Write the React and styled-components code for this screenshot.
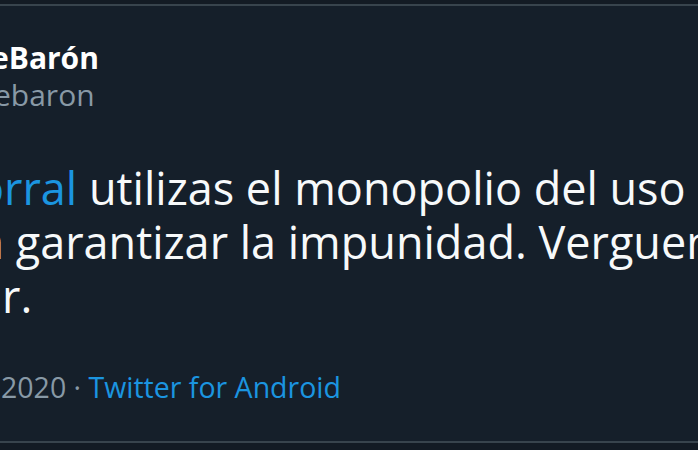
import React from "react";
import styled, { createGlobalStyle } from "styled-components";

const Global = createGlobalStyle`
  html, body { margin: 0; padding: 0; background: #141d27; }
  body { font-family: "Open Sans", "Noto Sans", "DejaVu Sans", sans-serif; -webkit-font-smoothing: antialiased; }
`;

const Page = styled.div`
  width: 698px;
  height: 450px;
  overflow: hidden;
  background: #151f2a;
  display: flex;
  flex-direction: column;
`;

const Strip = styled.div`
  height: ${p => p.$h}px;
  background: #131b24;
  flex: none;
`;

const Divider = styled.div`
  height: 2px;
  background: #38444d;
  flex: none;
`;

const Tweet = styled.article`
  flex: 1;
  display: flex;
  flex-direction: column;
  overflow: hidden;
  padding-top: 34px;
`;

const Header = styled.div`
  display: flex;
  flex-direction: column;
`;

const Name = styled.div`
  font-weight: 700;
  font-size: 30px;
  line-height: 35px;
  color: #ffffff;
  white-space: nowrap;
  margin-left: ${p => p.$offset}px;
`;

const Handle = styled.div`
  font-size: 30px;
  line-height: 35px;
  color: #8899a6;
  white-space: nowrap;
  margin-left: ${p => p.$offset}px;
  margin-top: 2px;
`;

const Body = styled.div`
  margin-top: 49px;
  display: flex;
  flex-direction: column;
`;

const TextLine = styled.div`
  font-size: 45px;
  line-height: 54px;
  color: #f7f9fa;
  white-space: nowrap;
  margin-left: ${p => p.$offset}px;
`;

const Mention = styled.span`
  color: #1b95e0;
`;

const Meta = styled.div`
  margin-top: 47px;
  font-size: 28.5px;
  line-height: 34px;
  color: #8899a6;
  white-space: nowrap;
  margin-left: ${p => p.$offset}px;
`;

const Source = styled.span`
  color: #1b95e0;
`;

export default function App() {
  return (
    <>
      <Global />
      <Page>
        <Strip $h={4} />
        <Divider />
        <Tweet>
          <Header>
            <Name $offset={-9}>eBarón</Name>
            <Handle $offset={-6}>ebaron</Handle>
          </Header>
          <Body>
            <TextLine $offset={-23}>
              <Mention>orral</Mention> utilizas el monopolio del uso de la fuerza
            </TextLine>
            <TextLine $offset={-21}>a garantizar la impunidad. Verguenza de</TextLine>
            <TextLine $offset={2}>r.</TextLine>
          </Body>
          <Meta $offset={1}>
            2020 · <Source>Twitter for Android</Source>
          </Meta>
        </Tweet>
        <Divider />
        <Strip $h={7} />
      </Page>
    </>
  );
}
